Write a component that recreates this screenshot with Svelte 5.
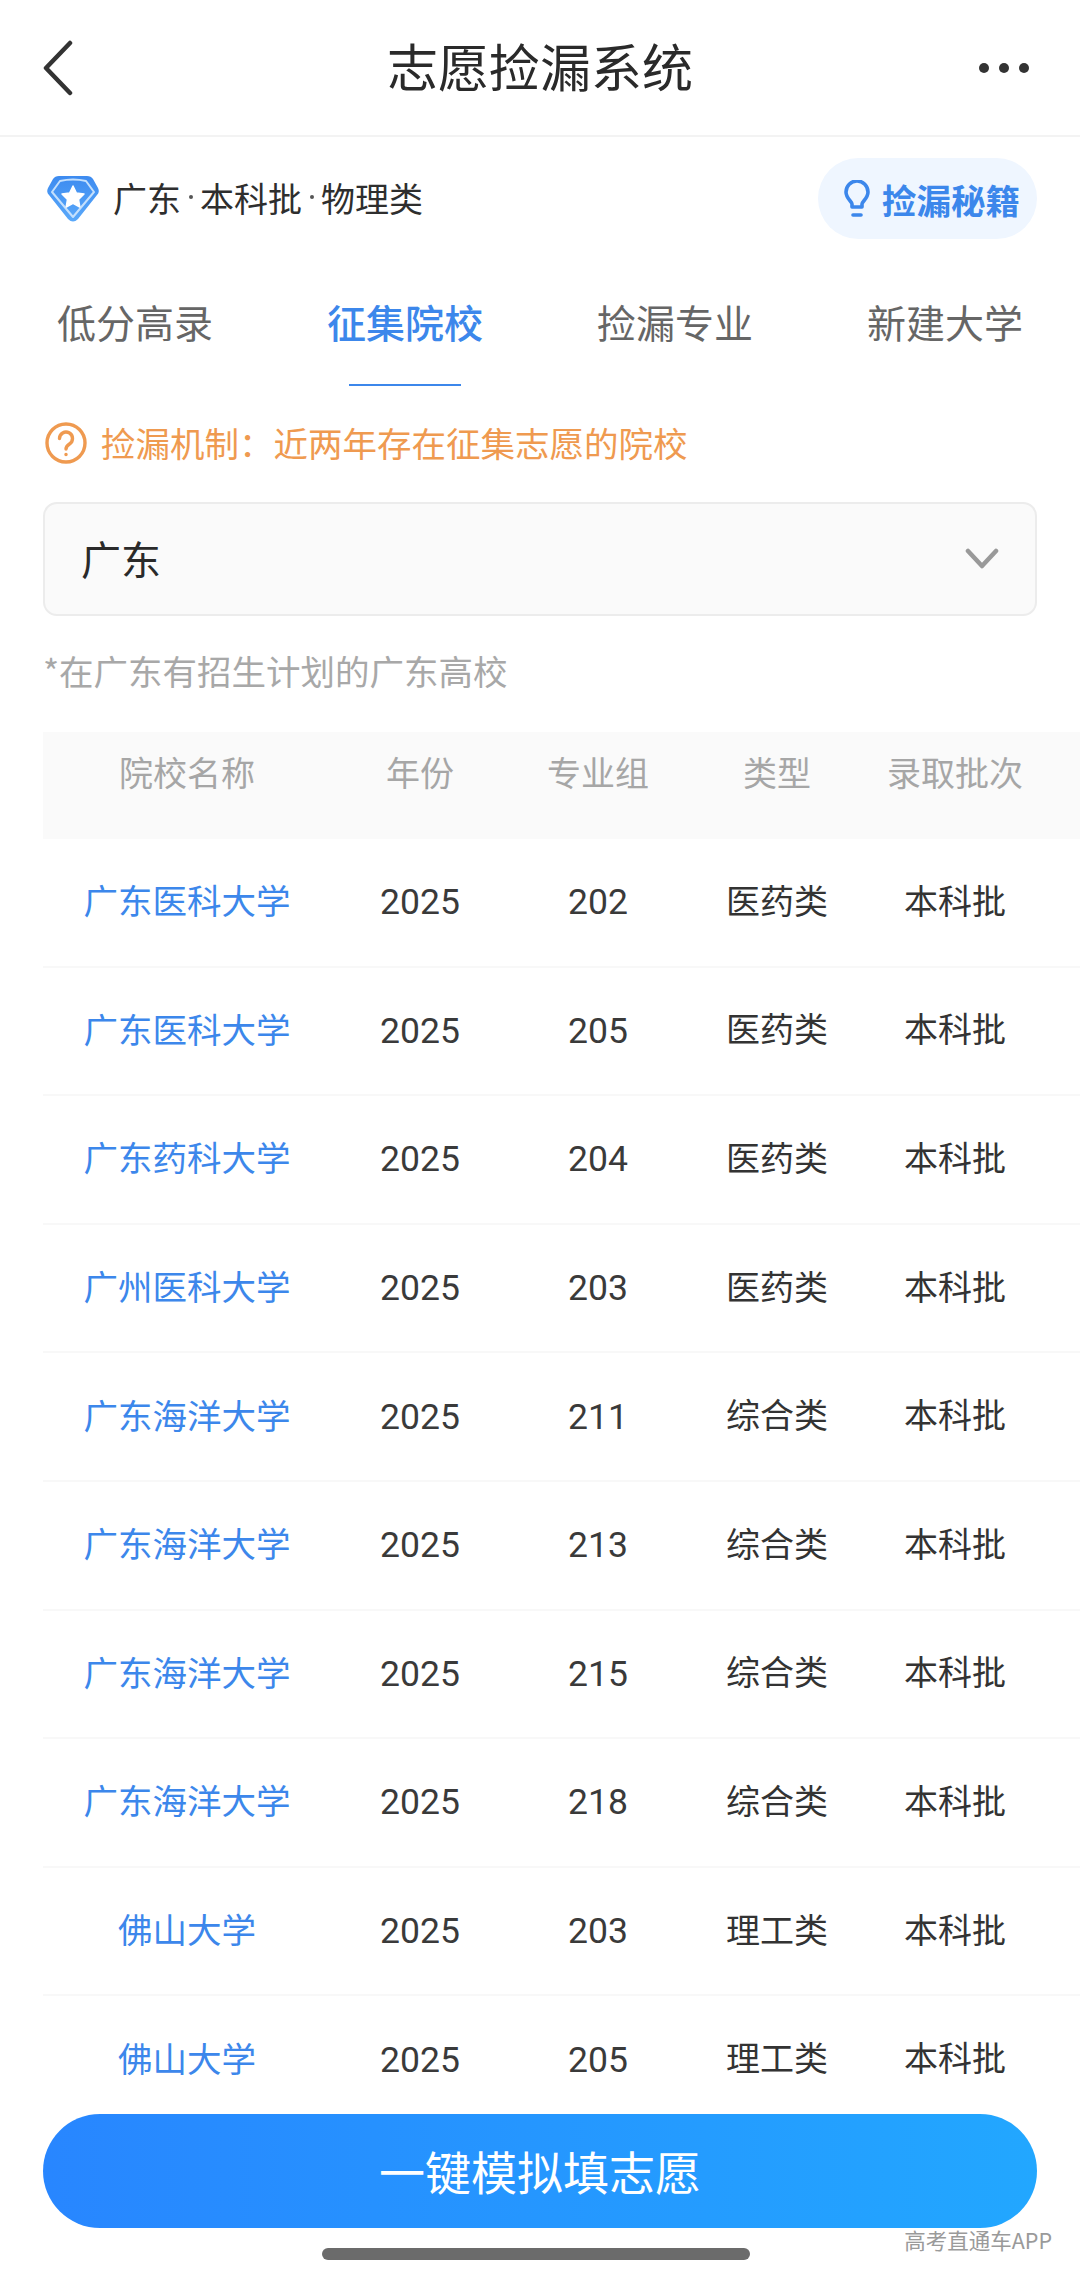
<script lang="ts">
	const tabs = ['低分高录', '征集院校', '捡漏专业', '新建大学'];
	const activeTab = 1;
	const columns = ['院校名称', '年份', '专业组', '类型', '录取批次'];
	const crumbs = ['广东', '本科批', '物理类'];

	const rows = [
		{ name: '广东医科大学', group: '202', kind: '医药类' },
		{ name: '广东医科大学', group: '205', kind: '医药类' },
		{ name: '广东药科大学', group: '204', kind: '医药类' },
		{ name: '广州医科大学', group: '203', kind: '医药类' },
		{ name: '广东海洋大学', group: '211', kind: '综合类' },
		{ name: '广东海洋大学', group: '213', kind: '综合类' },
		{ name: '广东海洋大学', group: '215', kind: '综合类' },
		{ name: '广东海洋大学', group: '218', kind: '综合类' },
		{ name: '佛山大学', group: '203', kind: '理工类' },
		{ name: '佛山大学', group: '205', kind: '理工类' }
	];
</script>

<div class="page">
	<header class="nav">
		<svg class="nav-back" width="34" height="56" viewBox="0 0 34 56" fill="none">
			<path d="M28 3 L4 28 L28 53" stroke="#333" stroke-width="4.5" stroke-linecap="round" stroke-linejoin="round" />
		</svg>
		<h1 class="nav-title">志愿捡漏系统</h1>
		<div class="nav-more">
			<span></span>
			<span></span>
			<span></span>
		</div>
	</header>

	<section class="info">
		<div class="info-left">
			<svg width="54" height="50" viewBox="0 0 54 50">
				<defs>
					<linearGradient id="badge" x1="0" y1="0" x2="0" y2="1">
						<stop offset="0" stop-color="#3d8bf0" />
						<stop offset="1" stop-color="#5aa9fa" />
					</linearGradient>
				</defs>
				<path d="M13 2 H41 Q45 2 47 5 L52 14 Q54 18 51 21 L32 45 Q27 50 22 45 L3 21 Q0 18 2 14 L7 5 Q9 2 13 2 Z" fill="url(#badge)" />
				<path d="M14 7 Q27 4 40 7 L48 18 L27 43 L6 18 Z" fill="none" stroke="#c4e0fd" stroke-width="2" stroke-linejoin="round" />
				<path d="M27 12 L30.4 19 L38 20 L32.5 25.4 L33.8 33 L27 29.4 L20.2 33 L21.5 25.4 L16 20 L23.6 19 Z" fill="#fff" stroke="#fff" stroke-width="1.5" stroke-linejoin="round" />
			</svg>
			<span class="info-text">
				{#each crumbs as crumb, i}
					{#if i > 0}<span class="dot"></span>{/if}{crumb}
				{/each}
			</span>
		</div>
		<div class="tips">
			<svg width="28" height="38" viewBox="0 0 28 38" fill="none" stroke="#3c87eb" stroke-width="3.6" stroke-linecap="round">
				<path d="M9 27 V24 C9 21.5 3 18.5 3 12 A11 11 0 0 1 25 12 C25 18.5 19 21.5 19 24 V27 Z" stroke-linejoin="round" />
				<path d="M10 35 H18" />
			</svg>
			<span>捡漏秘籍</span>
		</div>
	</section>

	<nav class="tabs">
		{#each tabs as tab, i}
			<div class="tab" class:active={i === activeTab}>{tab}</div>
		{/each}
	</nav>

	<div class="notice">
		<svg width="42" height="42" viewBox="0 0 42 42" fill="none" stroke="#ef9a50" stroke-width="3.4">
			<circle cx="21" cy="21" r="19" />
			<path d="M14.5 16.5 A6.5 6.5 0 1 1 24.5 22 C22 23.6 21 24.5 21 27" stroke-linecap="round" />
			<circle cx="21" cy="32.5" r="1" fill="#ef9a50" stroke-width="1.5" />
		</svg>
		<span class="notice-text">捡漏机制：近两年存在征集志愿的院校</span>
	</div>

	<div class="select">
		<span class="select-value">广东</span>
		<svg width="34" height="22" viewBox="0 0 34 22" fill="none">
			<path d="M3 3 L17 18 L31 3" stroke="#999" stroke-width="4.5" stroke-linecap="round" stroke-linejoin="round" />
		</svg>
	</div>

	<p class="hint">*在广东有招生计划的广东高校</p>

	<div class="table">
		<div class="row head">
			{#each columns as col}
				<div>{col}</div>
			{/each}
		</div>
		{#each rows as row}
			<div class="row">
				<div class="school">{row.name}</div>
				<div class="num">2025</div>
				<div class="num">{row.group}</div>
				<div>{row.kind}</div>
				<div>本科批</div>
			</div>
		{/each}
	</div>

	<div class="footer">
		<button class="cta">一键模拟填志愿</button>
		<div class="home-bar"></div>
		<div class="mark">高考直通车APP</div>
	</div>
</div>

<style>
	:global(body) {
		background: #fff;
	}

	.page {
		position: relative;
		width: 1080px;
		height: 2280px;
		overflow: hidden;
		background: #fff;
		color: #333;
		font-family: 'Noto Sans CJK SC', 'Noto Sans', sans-serif;
	}

	.nav {
		height: 135px;
		display: grid;
		grid-template-columns: 1fr auto 1fr;
		align-items: center;
		padding: 0 42px;
		border-bottom: 2px solid #f3f3f3;
	}

	.nav-title {
		margin: 0 0 6px;
		font-size: 51px;
		font-weight: 400;
		color: #2a2a2a;
	}

	.nav-more {
		width: 50px;
		display: flex;
		justify-content: space-between;
		justify-self: end;
		margin-right: 9px;
	}

	.nav-more span {
		width: 10px;
		height: 10px;
		border-radius: 50%;
		background: #333;
	}

	.info {
		display: flex;
		align-items: center;
		justify-content: space-between;
		padding: 21px 43px 0 46px;
	}

	.info-left {
		display: flex;
		align-items: center;
		gap: 13px;
	}

	.info-text {
		margin-bottom: 3px;
		font-size: 34px;
		color: #2e2e2e;
		white-space: nowrap;
		display: flex;
		align-items: center;
	}

	.dot {
		width: 4px;
		height: 4px;
		margin: 0 7px 0 8px;
		border-radius: 50%;
		background: #555;
	}

	.tips {
		height: 81px;
		width: 219px;
		box-sizing: border-box;
		padding-left: 25px;
		border-radius: 41px;
		background: #eff6ff;
		display: flex;
		align-items: center;
		gap: 11px;
		font-size: 34.5px;
		font-weight: 700;
		color: #3c87eb;
	}

	.tabs {
		display: grid;
		grid-template-columns: repeat(4, 270px);
		margin-top: 27px;
	}

	.tab {
		height: 120px;
		box-sizing: border-box;
		padding-top: 27px;
		text-align: center;
		font-size: 39px;
		color: #666;
		position: relative;
	}

	.tab.active {
		color: #3c87eb;
		font-weight: 500;
	}

	.tab.active::after {
		content: '';
		position: absolute;
		left: 79px;
		bottom: 0;
		width: 112px;
		height: 2px;
		background: #3c87eb;
	}

	.notice {
		display: flex;
		align-items: center;
		gap: 14px;
		padding: 0 45px;
		margin-top: 35px;
		height: 44px;
		font-size: 34.5px;
		color: #ef9a50;
	}

	.notice-text {
		margin-bottom: 2px;
	}

	.select {
		margin: 37px 43px 0;
		height: 114px;
		box-sizing: border-box;
		padding: 0 36px 0 36px;
		display: flex;
		align-items: center;
		justify-content: space-between;
		background: #fafafa;
		border: 2px solid #ececec;
		border-radius: 14px;
		font-size: 40px;
		color: #2a2a2a;
	}

	.select-value {
		margin-bottom: 3px;
	}

	.hint {
		margin: 29px 0 0 43px;
		height: 50px;
		line-height: 50px;
		font-size: 34.5px;
		color: #a8a8a8;
	}

	.table {
		margin: 37px 0 0 43px;
	}

	.row {
		display: grid;
		grid-template-columns: 288px 178px 178px 180px 176px;
		height: 128.6px;
		box-sizing: border-box;
		padding-bottom: 6px;
		align-items: center;
		text-align: center;
		font-size: 34px;
		color: #333;
		border-bottom: 2px solid #f8f8f8;
	}

	.row.head {
		height: 107px;
		align-items: start;
		padding: 15px 0 0;
		background: #fafafa;
		color: #a6a6a6;
		border-bottom: none;
	}

	.school {
		color: #3c87eb;
		font-size: 34.5px;
	}

	.num {
		padding-top: 6px;
		font-family: Roboto, sans-serif;
		font-size: 35.5px;
		color: #3a3a3a;
	}

	.footer {
		position: absolute;
		left: 0;
		right: 0;
		bottom: 0;
		height: 166px;
		background: #fff;
	}

	.cta {
		display: block;
		width: 994px;
		height: 114px;
		margin: 0 43px;
		padding: 0 0 3px;
		border: none;
		border-radius: 57px;
		background: linear-gradient(90deg, #2886ff, #22a7ff);
		color: #fff;
		font-family: inherit;
		font-size: 46px;
	}

	.home-bar {
		position: absolute;
		left: 322px;
		top: 134px;
		width: 428px;
		height: 12px;
		border-radius: 6px;
		background: #6b6b6b;
	}

	.mark {
		position: absolute;
		right: 28px;
		top: 110px;
		font-size: 21.5px;
		color: #9a9a9a;
	}
</style>
